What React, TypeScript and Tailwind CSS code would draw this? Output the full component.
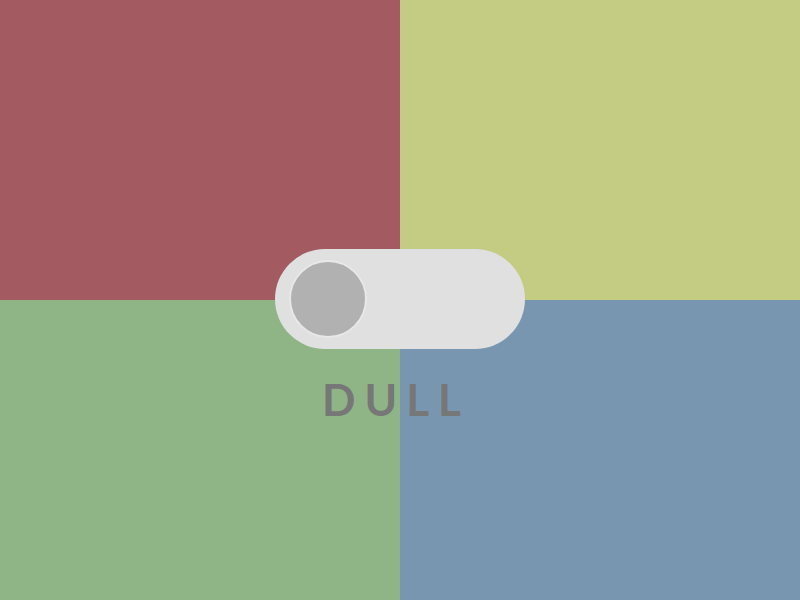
import React from "react";

export default function App() {
  return (
    <div className="relative w-full h-[600px] overflow-hidden">
      <div className="grid grid-cols-2 grid-rows-2 w-full h-full">
        <div className="bg-[#a35a60]"></div>
        <div className="bg-[#c4cc84]"></div>
        <div className="bg-[#8fb587]"></div>
        <div className="bg-[#7896b0]"></div>
      </div>
      <div className="absolute left-0 top-[249px] w-full flex flex-col items-center">
        <div className="w-[250px] h-[100px] rounded-full bg-[#e0e0e0] flex items-center pl-[14px]">
          <div className="w-[78px] h-[78px] rounded-full bg-[#b1b1b1] border-2 border-[#e8e8e8]"></div>
        </div>
        <div
          className="mt-[28px] mr-[8px] text-[44px] leading-none font-bold tracking-[9px] text-[#777777]"
          style={{ fontFamily: "Lato, 'Noto Sans', sans-serif" }}
        >
          DULL
        </div>
      </div>
    </div>
  );
}
